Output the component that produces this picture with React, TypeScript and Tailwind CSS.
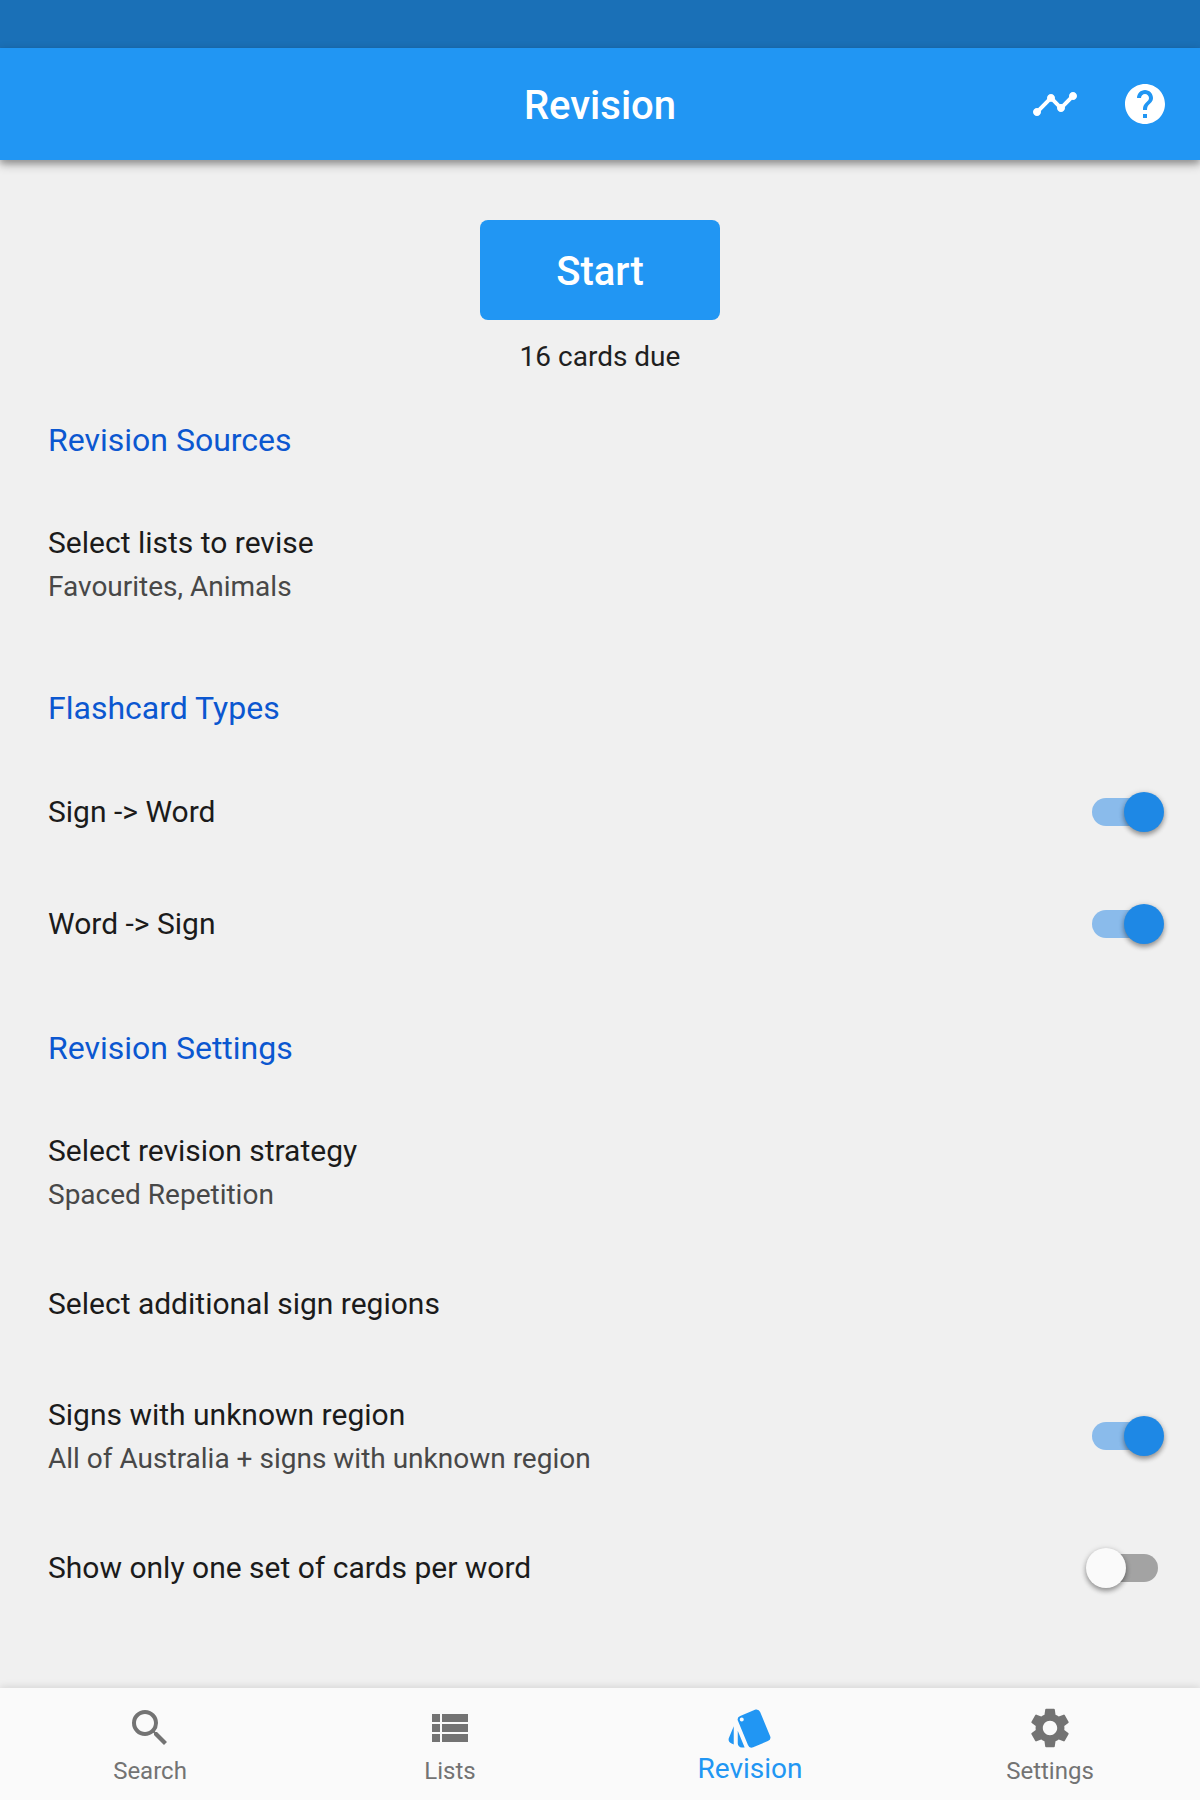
import { useState } from "react";
import type { ReactNode } from "react";
import { MdHelp, MdSearch, MdSettings, MdStyle, MdTimeline } from "react-icons/md";

function ViewListIcon() {
  return (
    <svg viewBox="0 0 24 24" className="size-12" fill="currentColor" aria-hidden="true">
      <path d="M3 5h4v4H3zM8 5h13v4H8zM3 10h4v4H3zM8 10h13v4H8zM3 15h4v4H3zM8 15h13v4H8z" />
    </svg>
  );
}

function Section({ title, children }: { title: string; children: ReactNode }) {
  return (
    <section className="mb-[18px]">
      <h2 className="px-12 pt-8 pb-[30px] text-[32px] leading-9 text-[#0b57d0]">{title}</h2>
      {children}
    </section>
  );
}

function RowText({ title, detail }: { title: string; detail?: string }) {
  return (
    <span className="block">
      <span className="block text-[30px] leading-11 text-[#1b1b1b]">{title}</span>
      {detail && <span className="block pt-0.5 text-[28px] leading-10 text-[#484848]">{detail}</span>}
    </span>
  );
}

function LinkRow({ title, detail }: { title: string; detail?: string }) {
  return (
    <button
      type="button"
      className={`flex w-full items-center px-12 text-left ${detail ? "min-h-[152px]" : "min-h-28"}`}
    >
      <RowText title={title} detail={detail} />
    </button>
  );
}

function SwitchRow({ title, detail, initial }: { title: string; detail?: string; initial: boolean }) {
  const [on, setOn] = useState(initial);
  return (
    <label
      className={`flex w-full cursor-pointer items-center justify-between pr-[42px] pl-12 ${
        detail ? "min-h-[152px]" : "min-h-28"
      }`}
    >
      <RowText title={title} detail={detail} />
      <input
        type="checkbox"
        role="switch"
        checked={on}
        onChange={(e) => setOn(e.target.checked)}
        className="relative h-7 w-[66px] shrink-0 cursor-pointer appearance-none rounded-full bg-[#a3a3a3] before:absolute before:-top-1.5 before:-left-1.5 before:size-10 before:rounded-full before:bg-[#fafafa] before:shadow-[0_3px_5px_rgba(0,0,0,0.32),0_1px_6px_rgba(0,0,0,0.16)] before:content-[''] checked:bg-[#8abbeb] checked:before:left-8 checked:before:bg-[#1e88e5]"
      />
    </label>
  );
}

function NavItem({ label, icon, active }: { label: string; icon: ReactNode; active?: boolean }) {
  return (
    <a
      href={`#${label.toLowerCase()}`}
      aria-current={active ? "page" : undefined}
      className={`flex flex-1 flex-col items-center pt-4 ${active ? "text-[#2196f3]" : "text-[#737373]"}`}
    >
      {icon}
      <span className={active ? "text-[28px] leading-[34px]" : "text-2xl leading-[38px]"}>{label}</span>
    </a>
  );
}

export default function App() {
  return (
    <div className="flex min-h-screen flex-col bg-[#f0f0f0] font-[Roboto,sans-serif]">
      <div className="h-12 bg-[#1a70b7]" />
      <header className="grid h-28 grid-cols-[1fr_auto_1fr] items-center bg-[#2196f3] text-white shadow-[0_4px_10px_rgba(0,0,0,0.32),0_4px_5px_rgba(0,0,0,0.14)]">
        <h1 className="col-start-2 pt-1 text-[40px] leading-12 font-medium">Revision</h1>
        <div className="flex justify-end gap-[42px] pr-[31px]">
          <button type="button" aria-label="Revision progress">
            <MdTimeline className="size-12" />
          </button>
          <button type="button" aria-label="Help">
            <MdHelp className="size-12" />
          </button>
        </div>
      </header>

      <main className="flex-1">
        <div className="flex flex-col items-center pt-15 pb-[17px]">
          <button
            type="button"
            className="h-[100px] w-60 rounded-lg bg-[#2196f3] pt-1 text-[40px] leading-12 font-medium text-white"
          >
            Start
          </button>
          <p className="pt-[21px] text-[28px] leading-8 text-[#1f1f1f]">16 cards due</p>
        </div>

        <Section title="Revision Sources">
          <LinkRow title="Select lists to revise" detail="Favourites, Animals" />
        </Section>
        <Section title="Flashcard Types">
          <SwitchRow title="Sign -> Word" initial={true} />
          <SwitchRow title="Word -> Sign" initial={true} />
        </Section>
        <Section title="Revision Settings">
          <LinkRow title="Select revision strategy" detail="Spaced Repetition" />
          <LinkRow title="Select additional sign regions" />
          <SwitchRow
            title="Signs with unknown region"
            detail="All of Australia + signs with unknown region"
            initial={true}
          />
          <SwitchRow title="Show only one set of cards per word" initial={false} />
        </Section>
      </main>

      <nav className="sticky bottom-0 flex h-28 bg-[#fafafa] shadow-[0_-1px_8px_rgba(0,0,0,0.12)]">
        <NavItem label="Search" icon={<MdSearch className="size-12" />} />
        <NavItem label="Lists" icon={<ViewListIcon />} />
        <NavItem label="Revision" icon={<MdStyle className="size-12" />} active />
        <NavItem label="Settings" icon={<MdSettings className="size-12" />} />
      </nav>
    </div>
  );
}
